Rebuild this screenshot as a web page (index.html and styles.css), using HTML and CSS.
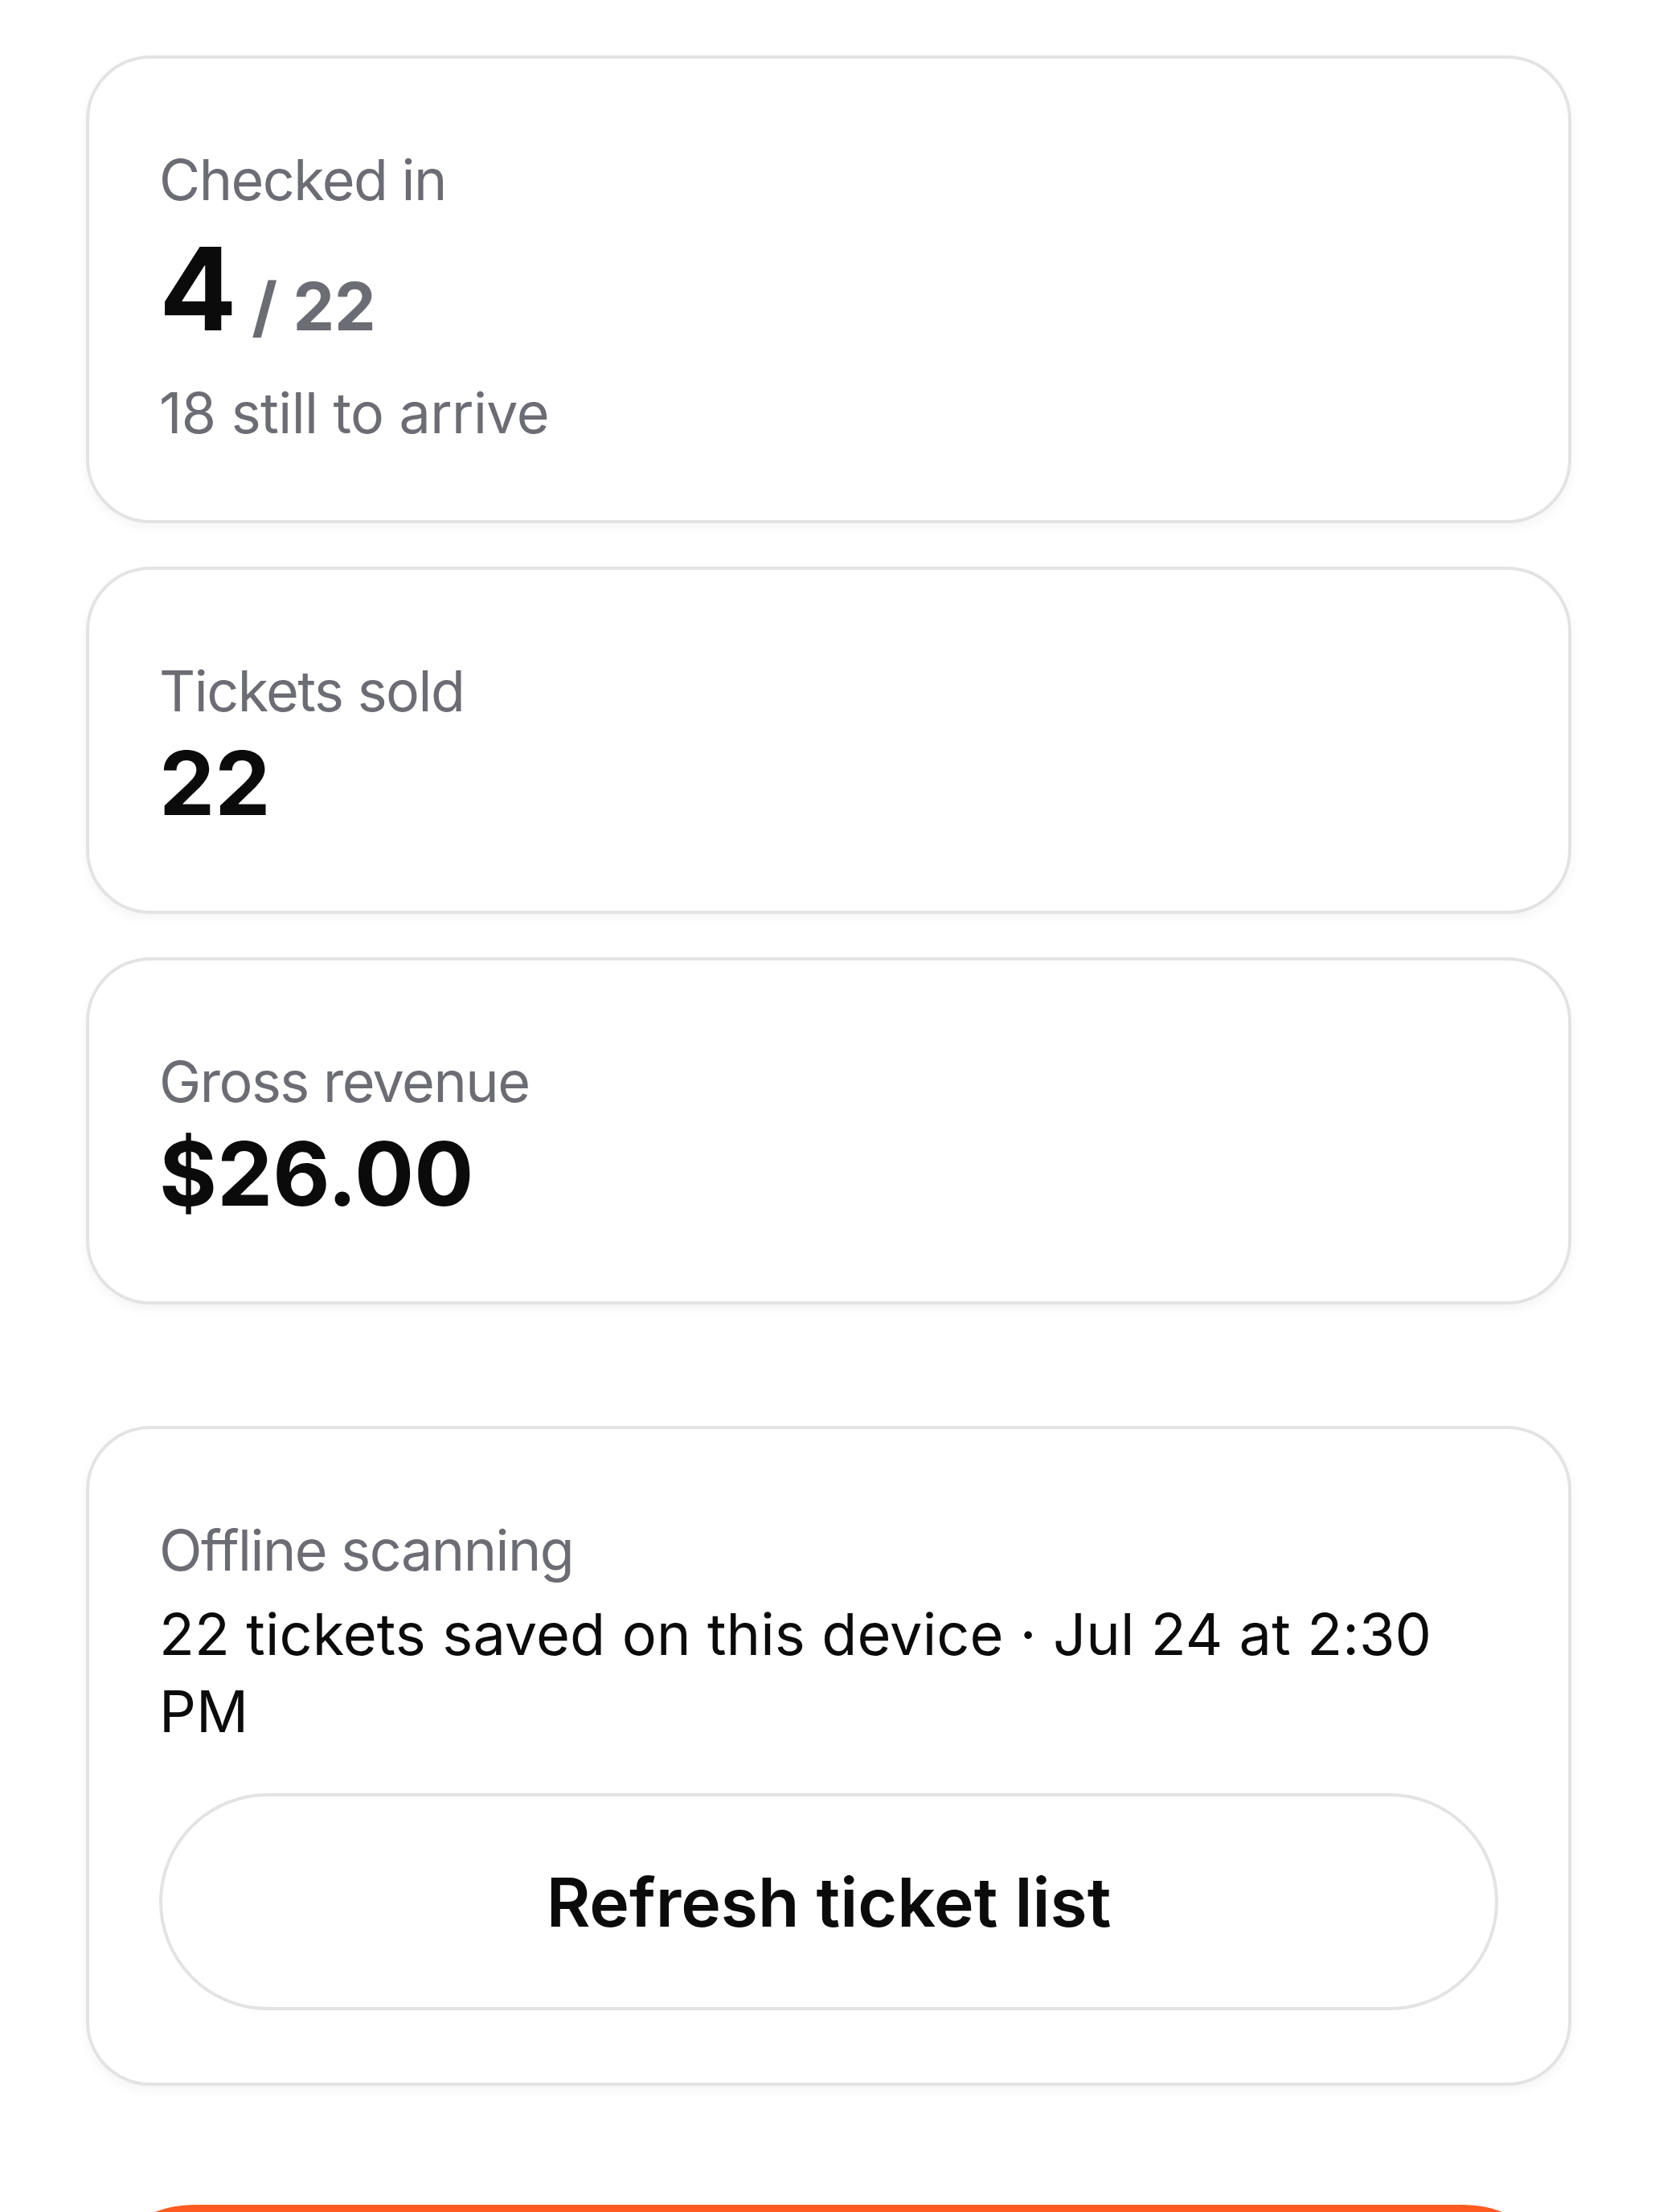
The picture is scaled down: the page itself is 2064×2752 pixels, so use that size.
FILE: index.html
```html
<!DOCTYPE html>
<html lang="en">
<head>
<meta charset="utf-8">
<title>Event dashboard</title>
<link rel="stylesheet" href="styles.css">
</head>
<body>
<main class="page">
  <section class="stats">
    <div class="card">
      <div class="label">Checked in</div>
      <div class="big"><span class="big-num">4</span><span class="of"> / 22</span></div>
      <div class="sub">18 still to arrive</div>
    </div>
    <div class="card">
      <div class="label">Tickets sold</div>
      <div class="value">22</div>
    </div>
    <div class="card">
      <div class="label">Gross revenue</div>
      <div class="value">$26.00</div>
    </div>
  </section>
  <section class="card offline">
    <div class="label">Offline scanning</div>
    <div class="body">22 tickets saved on this device · Jul 24 at 2:30 PM</div>
    <button class="btn-outline" type="button">Refresh ticket list</button>
  </section>
  <button class="btn-primary" type="button" aria-label="Start scanning"></button>
</main>
</body>
</html>
```

FILE: styles.css
```css
html, body {
  margin: 0;
  padding: 0;
  background: #ffffff;
}
body {
  height: 2752px;
  overflow: hidden;
  font-family: "Inter", "Noto Sans", "Liberation Sans", sans-serif;
  color: #0b0b0c;
}
.page {
  display: flex;
  flex-direction: column;
  padding: 69px 109px 0 107px;
}
.stats {
  display: flex;
  flex-direction: column;
  gap: 54px;
}
.card {
  background: #ffffff;
  border: 4px solid #e3e3e4;
  border-radius: 80px;
  padding: 108px 87px 90px;
  box-shadow: 0 6px 14px rgba(0, 0, 0, 0.045);
  display: flex;
  flex-direction: column;
}
.label {
  font-size: 70px;
  line-height: 86px;
  color: #6c6c75;
  font-weight: 400;
  letter-spacing: -1.5px;
}
.big {
  margin-top: 6px;
  font-size: 143px;
  line-height: 172px;
  font-weight: 700;
  color: #0b0b0c;
  letter-spacing: -1px;
}
.of {
  font-size: 82px;
  line-height: 1;
  color: #6c6c75;
  letter-spacing: 0;
}
.sub {
  margin-top: 26px;
  font-size: 70px;
  line-height: 86px;
  color: #6c6c75;
  letter-spacing: -0.6px;
}
.value {
  margin-top: 2px;
  font-size: 110px;
  line-height: 138px;
  font-weight: 700;
  color: #0b0b0c;
  letter-spacing: 0;
}
.offline {
  margin-top: 151px;
}
.body {
  margin-top: 13px;
  font-size: 72px;
  line-height: 96px;
  color: #0b0b0c;
  letter-spacing: 0.1px;
}
.btn-outline {
  margin-top: 54px;
  height: 270px;
  border: 4px solid #e3e3e4;
  border-radius: 135px;
  background: #ffffff;
  font-family: inherit;
  font-size: 84px;
  font-weight: 600;
  color: #0b0b0c;
  cursor: pointer;
}
.btn-primary {
  margin-top: 148px;
  height: 268px;
  border: none;
  border-radius: 134px;
  background: #ff5a1f;
  cursor: pointer;
}
```
